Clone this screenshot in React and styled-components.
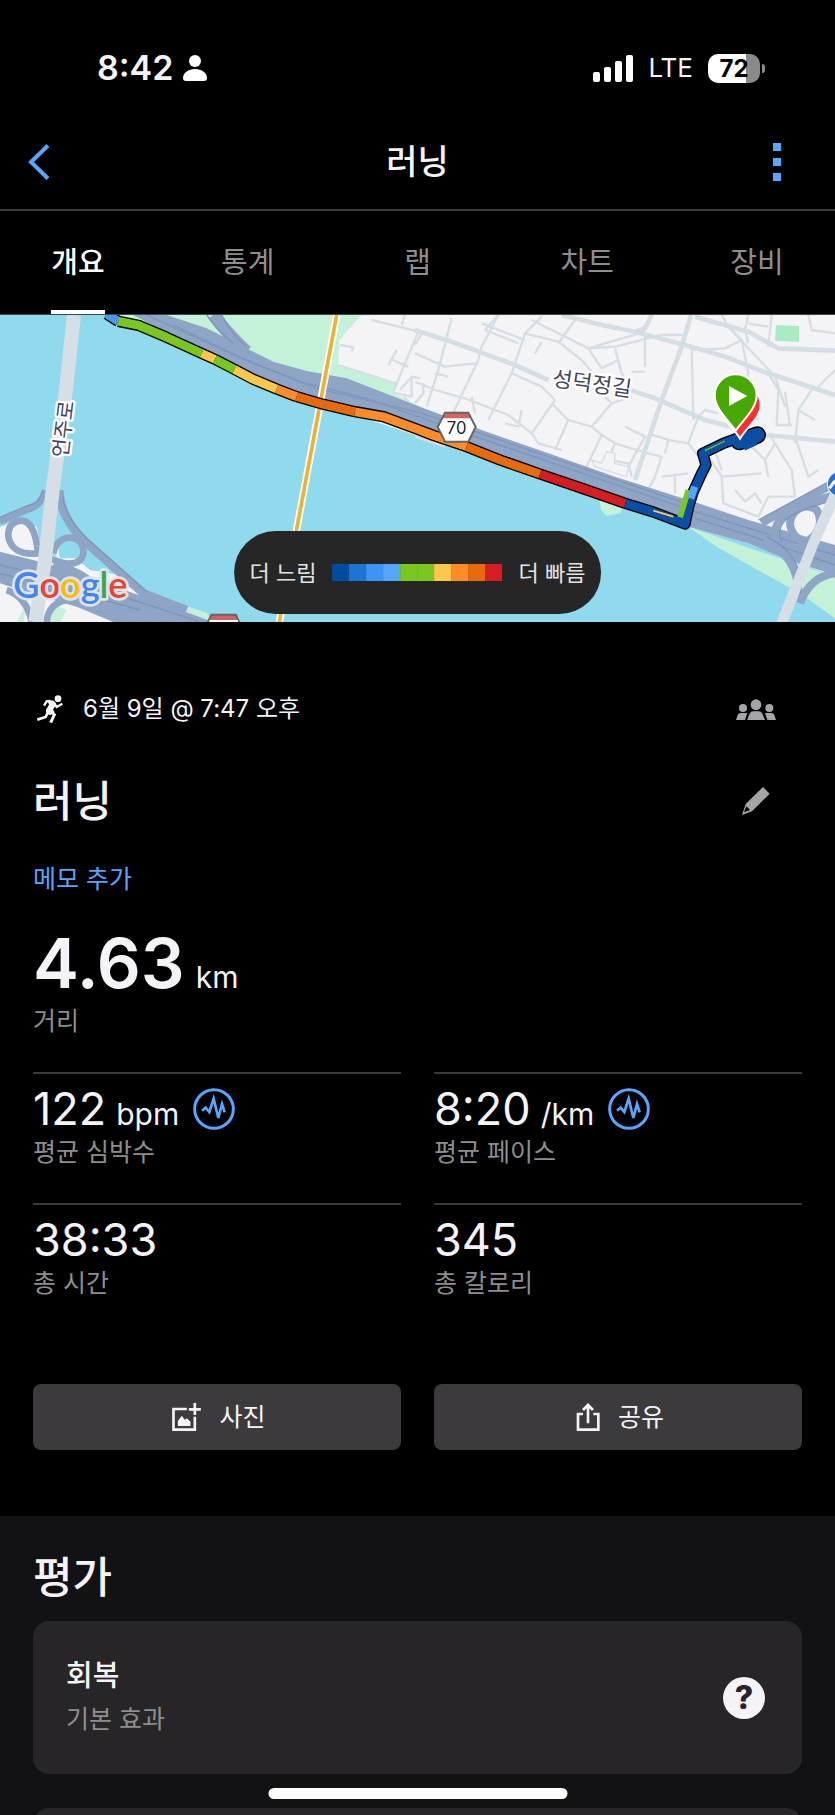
import React from 'react';
import styled, { createGlobalStyle } from 'styled-components';

const GlobalStyle = createGlobalStyle`
  * {
    box-sizing: border-box;
  }

  body {
    margin: 0;
    background: #000;
    color: #f5f3f7;
    font-family: Inter, 'Noto Sans CJK KR', sans-serif;
  }

  h1, h2, h3, p {
    margin: 0;
  }

  button {
    padding: 0;
    border: 0;
    background: none;
    color: inherit;
    font: inherit;
    cursor: pointer;
  }

  svg {
    display: block;
  }
`;

const Screen = styled.div`
  position: relative;
  display: flex;
  flex-direction: column;
  height: 100vh;
  overflow: hidden;
`;

const StatusBar = styled.div`
  flex: none;
  display: flex;
  justify-content: space-between;
  align-items: center;
  height: 118px;
  padding: 18px 70px 0 97px;
`;

const StatusGroup = styled.div`
  display: flex;
  align-items: center;
  gap: ${({ $gap }) => $gap}px;
`;

const Clock = styled.span`
  font-size: 34px;
  line-height: 40px;
  font-weight: 600;
`;

const Network = styled.span`
  font-size: 26px;
  line-height: 32px;
`;

const Battery = styled.div`
  display: flex;
  align-items: center;
  gap: 2px;
`;

const BatteryLevel = styled.span`
  width: 52px;
  border-radius: 10px;
  background: linear-gradient(to right, #fff 73%, #8a8a8a 73%);
  color: #000;
  font-size: 24px;
  line-height: 29px;
  font-weight: 700;
  text-align: center;
`;

const BatteryTip = styled.span`
  width: 3px;
  height: 9px;
  border-radius: 0 4px 4px 0;
  background: #8a8a8a;
`;

const Header = styled.header`
  flex: none;
  display: grid;
  grid-template-columns: 60px 1fr 60px;
  align-items: center;
  height: 93px;
  padding: 0 28px 4px;
  border-bottom: 2px solid #3c3c3c;
`;

const HeaderTitle = styled.h1`
  font-size: 34px;
  line-height: 44px;
  font-weight: 500;
  text-align: center;
`;

const HeaderButton = styled.button`
  display: flex;
  justify-content: ${({ $align }) => $align};
  align-items: center;
  height: 60px;
  padding-right: 26px;
  color: #58a6ff;
`;

const Tabs = styled.nav`
  flex: none;
  display: flex;
  justify-content: space-between;
  height: 104px;
  padding: 0 51px;
  border-bottom: 1px solid #444;
`;

const Tab = styled.button`
  min-width: 54px;
  border-top: 4px solid transparent;
  border-bottom: 4px solid ${({ $active }) => ($active ? '#fff' : 'transparent')};
  color: ${({ $active }) => ($active ? '#fff' : '#8f8d90')};
  font-size: 29px;
  line-height: 40px;
  font-weight: ${({ $active }) => ($active ? 500 : 400)};
`;

const Content = styled.main`
  flex: 1;
  min-height: 0;
  overflow-y: auto;
  scrollbar-width: none;
`;

const MapArea = styled.section`
  position: relative;
`;

const MapSvg = styled.svg`
  width: 100%;
  height: auto;
`;

const Legend = styled.div`
  position: absolute;
  left: 50%;
  bottom: 8px;
  transform: translateX(-50%);
  display: flex;
  align-items: center;
  gap: 16px;
  height: 83px;
  padding: 0 16px;
  border-radius: 42px;
  background: #262626;
  color: #e4e4e4;
  font-size: 22px;
  line-height: 32px;
  white-space: nowrap;
`;

const LegendBar = styled.div`
  display: flex;
`;

const LegendColor = styled.span`
  width: 17px;
  height: 17px;
  background: ${({ $color }) => $color};
`;

const Summary = styled.section`
  padding: 64px 33px 66px;
`;

const Row = styled.div`
  display: flex;
  justify-content: space-between;
  align-items: center;
  padding-right: 26px;
`;

const DateRow = styled(Row)`
  height: 46px;
  margin-bottom: 39px;
`;

const TitleRow = styled(Row)`
  height: 60px;
  margin-bottom: 30px;
  padding-right: 32px;
`;

const DateText = styled.p`
  display: flex;
  align-items: center;
  gap: 20px;
  padding-left: 4px;
  font-size: 24px;
  line-height: 36px;
`;

const SectionTitle = styled.h2`
  font-size: 43px;
  line-height: 50px;
  font-weight: 500;
`;

const IconButton = styled.button`
  color: #a6a4a8;
`;

const MemoButton = styled.button`
  display: block;
  margin-bottom: 30px;
  color: #58a6ff;
  font-size: 25px;
  line-height: 36px;
`;

const Distance = styled.div`
  margin-bottom: 33px;
`;

const DistanceValue = styled.p`
  display: flex;
  align-items: baseline;
  gap: 11px;
  margin-bottom: 4px;
  font-size: 69px;
  line-height: 72px;
  font-weight: 600;
`;

const Unit = styled.span`
  font-size: 30px;
  line-height: 36px;
  font-weight: 400;
`;

const Label = styled.div`
  color: #8f8d90;
  font-size: 25px;
  line-height: 36px;
`;

const TwoColumns = styled.div`
  display: grid;
  grid-template-columns: 1fr 1fr;
  column-gap: 33px;
`;

const Stat = styled.div`
  height: 131px;
  padding-top: 10px;
  border-top: 2px solid #3a393b;
`;

const StatValue = styled.div`
  display: flex;
  align-items: center;
  gap: 14px;
  height: 50px;
  font-size: 45px;
  line-height: 50px;
`;

const StatNumber = styled.span`
  display: flex;
  align-items: baseline;
  gap: 10px;
`;

const ChartButton = styled.button`
  color: #58a6ff;
`;

const Actions = styled(TwoColumns)`
  margin-top: 50px;
`;

const ActionButton = styled.button`
  display: flex;
  justify-content: center;
  align-items: center;
  gap: 18px;
  height: 66px;
  padding-left: 4px;
  border-radius: 8px;
  background: #3c3a3c;
  font-size: 25px;
  line-height: 36px;
`;

const Evaluation = styled.section`
  padding: 36px 33px;
  background: #121114;
`;

const Card = styled.div`
  display: flex;
  justify-content: space-between;
  align-items: center;
  min-height: 153px;
  padding: 37px;
  padding-left: 33px;
  border-radius: 16px;
  background: #272528;
`;

const CardList = styled.div`
  display: flex;
  flex-direction: column;
  gap: 34px;
  margin-top: 19px;
`;

const CardTitle = styled.h3`
  margin-bottom: 7px;
  font-size: 29px;
  line-height: 36px;
  font-weight: 500;
`;

const HelpButton = styled.button`
  width: 42px;
  height: 42px;
  border-radius: 50%;
  background: #f5f3f7;
  color: #272528;
  font-size: 32px;
  line-height: 42px;
  font-weight: 800;
`;

const HomeIndicator = styled.div`
  position: absolute;
  left: 50%;
  bottom: 16px;
  width: 299px;
  height: 11px;
  border-radius: 6px;
  background: #fff;
  transform: translateX(-50%);
`;

const TABS = ['개요', '통계', '랩', '차트', '장비'];

const PACE_COLORS = [
  '#004c9e',
  '#1a76d2',
  '#3b94f6',
  '#55a6ff',
  '#7ac71f',
  '#7ac71f',
  '#fbc84c',
  '#ff8c28',
  '#e86a0a',
  '#d71d22',
];

const STATS = [
  { label: '평균 심박수', value: '122', unit: 'bpm', chart: true },
  { label: '평균 페이스', value: '8:20', unit: '/km', chart: true },
  { label: '총 시간', value: '38:33' },
  { label: '총 칼로리', value: '345' },
];

const MAIN_STREETS = [
  'M0 60L110 95L300 165L400 210M645 240L720 265L870 330L1050 375L1260 395',
  'M440 15L560 45L660 65L810 105L930 140L1060 190L1260 255',
  'M828 15L800 110L740 270L700 390L660 510',
  'M710 15L690 55L660 65',
  'M840 20L1000 65L1090 115L1260 122',
];

const STREETS = [
  'M250 15L200 110L190 150L100 340M110 25L70 180L35 290M0 130L90 170L180 160',
  'M0 215L60 240L150 265L280 315M20 70L0 105M200 40L330 90M250 15L210 60L310 100',
  'M380 20L330 70L430 95L500 150L530 185M330 70L290 190L220 330M290 190L380 230L420 270',
  'M350 30L450 80L520 115L690 65M520 115L600 110L740 75L810 75M520 115L560 175',
  'M600 115L620 190L650 240M690 75V170M650 185H690M560 175L610 150',
  'M420 270L350 370L370 400L440 420M280 315L350 370M410 280L460 330L530 350L560 375',
  'M530 350L590 280L650 260M590 280L560 250M460 330L420 420M560 375L600 400L700 430',
  'M560 375L510 480M600 400L580 450L640 460L650 500M700 430L740 440L720 500L700 540',
  'M740 270L850 320L820 400L760 390L700 370M820 400L850 440M760 390L750 430',
  'M830 110L835 330M835 120L930 115L980 90L940 50L920 15M980 90L1000 190L980 240L1030 330',
  'M940 50L1080 200L1110 290M1060 190L1090 240L1085 350M1110 245L1125 350M1085 345H1130',
  'M1070 15L1060 110M1000 15L990 60L1000 100M1180 15L1190 60L1260 70M1000 40L1060 50',
  'M1190 240L1150 300L1140 400M1140 380L1180 500L1210 480M1150 300L1200 330M1260 180L1200 240',
  'M1000 400L1050 450L1080 400L1130 480L1140 560M1080 400L1065 375M1050 450L1060 500',
  'M880 440L920 500L925 580L1030 620M920 500L1040 490M960 540L990 575L1020 550L1040 580',
  'M900 420L920 480M850 320L870 300L910 310M1030 620L1060 560L1140 560',
  'M60 190L100 200M170 260L180 310M320 300L310 350L270 340M360 130L380 95M90 410L0 380',
  'M480 30L430 100M630 350L690 380L640 470M740 500L820 490M780 500V550M0 280L25 250V220',
];

const WEST_STREETS = [
  'M1115 30L1255 65L1180 245M1015 165L1195 222M1255 65L1300 80M1205 45L1215 15',
  'M1020 105L1060 112L1055 125M1190 120L1165 165M1178 150L1225 170M1200 240L1235 200L1260 205',
  'M1235 200V260L1180 248M1210 260L1225 275',
];

const ROUTE = [
  { color: '#4a98f5', d: 'M320 12L355 34' },
  { color: '#7ac71f', d: 'M355 34L415 46L500 82L605 130' },
  { color: '#fbc84c', d: 'M605 130L645 148' },
  { color: '#7ac71f', d: 'M645 148L703 178' },
  { color: '#fbc84c', d: 'M703 178L760 208L830 237' },
  { color: '#ff8c28', d: 'M830 237L890 260' },
  { color: '#e86a0a', d: 'M890 260L970 283L1065 305' },
  { color: '#ff8c28', d: 'M1065 305L1150 320L1250 357L1300 376L1400 410' },
  { color: '#e86a0a', d: 'M1400 410L1500 450L1620 492' },
  { color: '#d71d22', d: 'M1620 492L1740 533L1876 580' },
  {
    color: '#0a4fa4',
    d: 'M1876 580L1960 606L2055 642L2066 590L2080 545L2105 490L2118 465L2108 430L2170 400L2225 380L2275 368',
  },
];

const ROUTE_OUTLINE = ROUTE.map(({ d }) => d).join('');

function RouteMap() {
  return (
    <MapSvg viewBox="0 15 2505 921" role="img" aria-label="러닝 경로 지도">
      <rect y="15" width="2505" height="921" fill="#90daed" />

      {/* north bank */}
      <path
        d="M330 15L600 145L830 250L1050 310L1260 380L1645 490L1885 580L2065 650L2245 700L2505 800V15Z"
        fill="#f4f3f6"
      />
      <path
        d="M330 15H1085L1040 70L1018 90L1015 165L1195 222L1180 250L1260 290L1200 340L830 240Z"
        fill="#c4f2d8"
      />
      <path d="M1085 15L1030 75L1015 165L1195 222L1215 170L1260 65V15Z" fill="#f4f3f6" />
      <path
        d="M2065 650L2250 715L2505 800V925L2400 850L2300 795L2150 710Z"
        fill="#c4f2d8"
      />
      <path d="M1800 570L1870 590L1860 610L1820 618L1802 600Z" fill="#c4f2d8" />
      <path d="M2328 45L2397 48V96L2325 92Z" fill="#a9ecc3" />

      <g fill="none" stroke="#d5dfe3" strokeLinejoin="round">
        {WEST_STREETS.map((d) => (
          <path key={d} d={d} strokeWidth="7" />
        ))}
        <g transform="translate(1245 0)">
          {STREETS.map((d) => (
            <path key={d} d={d} strokeWidth="7" />
          ))}
          {MAIN_STREETS.map((d) => (
            <path key={d} d={d} strokeWidth="14" />
          ))}
          <path
            d="M530 450L560 460L575 425L600 430L598 460L640 470L635 500L540 470Z"
            fill="#f4f3f6"
            strokeWidth="4"
          />
        </g>
      </g>

      {/* riverside expressway */}
      <path
        d="M400 15H500L620 55L730 110L820 155L920 183L1040 205L1260 290L1445 360L1645 430L1845 500L2095 580L2245 630L2505 705V795L2365 750L2245 700L2065 650L1885 580L1645 490L1260 350L1050 300L830 232L760 200L600 120Z"
        fill="#8fa5c6"
      />
      <path d="M640 15Q690 80 740 125" fill="none" stroke="#8fa5c6" strokeWidth="38" />
      <g fill="none" stroke="#7f96ba" strokeWidth="4">
        <path d="M620 15Q660 70 700 100M665 15Q700 80 740 110" />
        <path d="M440 15L700 135L900 215L1100 265L1260 322L1645 455L2085 605L2505 735" />
        <path d="M520 45L760 160L950 235L1260 308L1645 440L2085 590" />
        <path d="M2085 625L2245 675L2505 765" />
      </g>

      {/* north-east interchange */}
      <g fill="none" stroke="#8fa5c6" strokeWidth="24">
        <path d="M2285 640Q2350 600 2505 520" />
        <path d="M2330 700C2310 640 2340 600 2505 555" />
        <path d="M2400 690C2330 640 2400 560 2450 600Q2475 640 2440 680L2390 720" />
        <path d="M2290 690Q2400 740 2395 860" />
        <path d="M2400 880Q2430 800 2505 790" />
      </g>
      <path
        d="M2275 630Q2350 590 2505 505M2345 700C2325 640 2350 610 2505 570M2300 680Q2412 735 2402 850"
        fill="none"
        stroke="#7f96ba"
        strokeWidth="4"
      />
      <path d="M2505 555L2440 700L2345 940" fill="none" stroke="#d5dfe5" strokeWidth="32" />

      {/* south-west interchange */}
      <path
        d="M0 650L60 630L110 650L125 720L170 740L160 705L215 735L270 780L360 795L430 860L520 890L620 936H0Z"
        fill="#f4f3f6"
      />
      <path d="M170 690L200 700L235 745L180 745Z" fill="#90daed" />
      <path d="M70 900L85 860L70 936H50ZM150 936L165 885L200 900L180 936Z" fill="#c4f2d8" />
      <path d="M455 855L620 908L640 936H560L470 885Z" fill="#c4f2d8" />
      <path
        d="M0 725L120 755L240 790L400 850L500 885L640 936H340L230 890L110 855L0 820Z"
        fill="#8fa5c6"
      />
      <g fill="none" stroke="#8fa5c6" strokeWidth="20">
        <path d="M135 540Q125 590 80 600L0 635" />
        <path d="M178 540Q180 620 250 690L430 850L560 900" strokeWidth="26" />
        <path d="M110 730C20 740 10 660 40 640C90 610 110 670 115 740" />
        <path d="M160 730C170 670 240 670 250 715C255 760 215 775 150 745" />
        <path d="M160 770Q230 770 290 830L350 900" />
        <path d="M95 936Q80 860 20 840M140 936Q145 880 200 870" />
      </g>
      <g fill="none" stroke="#7f96ba" strokeWidth="4">
        <path d="M0 765L240 825L400 870L600 936M0 790L240 850L420 900" />
        <path d="M0 622L80 588Q120 580 127 545M188 560Q195 620 260 685L440 845" />
      </g>
      <path
        d="M222 15L198 240L158 540L135 750L106 936"
        fill="none"
        stroke="#d5dfe5"
        strokeWidth="42"
      />

      {/* subway line across the river */}
      <path d="M1010 15L838 936" fill="none" stroke="#fff" strokeWidth="22" />
      <path d="M1010 15L838 936" fill="none" stroke="#edb235" strokeWidth="11" />

      <g fill="none" strokeLinejoin="round">
        <path d={ROUTE_OUTLINE} stroke="#000" strokeWidth="34" />
        <path d="M2218 395L2272 375" stroke="#000" strokeWidth="52" strokeLinecap="round" />
        {ROUTE.map(({ color, d }) => (
          <path key={d} d={d} stroke={color} strokeWidth="26" />
        ))}
        <path d="M2218 395L2272 375" stroke="#0a4fa4" strokeWidth="43" strokeLinecap="round" />
        <path d="M2232 415L2270 398" stroke="#0a4fa4" strokeWidth="14" />
        <path d="M2040 622L2065 540" stroke="#7ac71f" strokeWidth="17" />
        <path d="M2072 565L2084 530" stroke="#55a6ff" strokeWidth="22" />
        <path d="M2115 422L2175 393" stroke="#7ac71f" strokeWidth="4" />
        <path d="M1960 602L2020 620" stroke="#fbc84c" strokeWidth="6" />
      </g>

      {/* finish and start pins */}
      <path
        d="M2220 386C2200 350 2158 325 2158 285A62 62 0 0 1 2282 285C2282 325 2240 350 2220 386Z"
        fill="#ff2d2f"
        stroke="#fff"
        strokeWidth="6"
      />
      <path
        d="M2207 362C2187 332 2144 297 2144 256A63 63 0 0 1 2270 256C2270 297 2227 332 2207 362Z"
        fill="#47a900"
        stroke="#fff"
        strokeWidth="6"
      />
      <path d="M2187 228L2242 258L2187 288Z" fill="#fff" />

      {/* road shields */}
      <path d="M1313 351L1335 308H1405L1427 351L1405 395H1335Z" fill="#fff" />
      <path d="M1326 325L1335 308H1405L1414 325Z" fill="#dc6060" />
      <path
        d="M1313 351L1335 308H1405L1427 351L1405 395H1335Z"
        fill="none"
        stroke="#666"
        strokeWidth="6"
      />
      <text x="1370" y="371" fontSize="50" textAnchor="middle" fill="#222">
        70
      </text>
      <path d="M624 936L634 914H708L717 936Z" fill="#d85f60" stroke="#666" strokeWidth="6" />
      <path d="M628 930H714V936H628Z" fill="#fff" />
      <circle cx="2520" cy="522" r="38" fill="#2b6fd6" stroke="#fff" strokeWidth="3" />
      <path d="M2488 535L2505 512" stroke="#fff" strokeWidth="9" />

      <g
        fill="#3f4560"
        stroke="#fff"
        strokeWidth="14"
        strokeLinejoin="round"
        paintOrder="stroke"
        textAnchor="middle"
        fontSize="65"
      >
        <text transform="translate(1773 244) rotate(8)">성덕정길</text>
        <text transform="translate(212 360) rotate(-83)" fontSize="62">
          언주로
        </text>
      </g>
      <text
        x="40"
        y="864"
        fontFamily="Lato, sans-serif"
        fontSize="108"
        fontWeight="600"
        stroke="#dfe3ea"
        strokeWidth="16"
        strokeLinejoin="round"
        paintOrder="stroke"
      >
        <tspan fill="#4285f4">G</tspan>
        <tspan fill="#ea4335">o</tspan>
        <tspan fill="#fbbc05">o</tspan>
        <tspan fill="#4285f4">g</tspan>
        <tspan fill="#34a853">l</tspan>
        <tspan fill="#ea4335">e</tspan>
      </text>
    </MapSvg>
  );
}

function PersonIcon() {
  return (
    <svg width="24" height="26" viewBox="0 0 24 26" fill="#fff">
      <circle cx="12" cy="6" r="6" />
      <path d="M0 23C0 18 5 14 12 14S24 18 24 23Q24 26 21 26H3Q0 26 0 23Z" />
    </svg>
  );
}

function SignalIcon() {
  return (
    <svg width="40" height="27" viewBox="0 0 40 27" fill="#fff">
      <rect y="17" width="7" height="10" rx="2" />
      <rect x="11" y="12" width="7" height="15" rx="2" />
      <rect x="22" y="6" width="7" height="21" rx="2" />
      <rect x="33" width="7" height="27" rx="2" />
    </svg>
  );
}

function BackIcon() {
  return (
    <svg width="22" height="36" viewBox="0 0 22 36" fill="none" stroke="currentColor">
      <path d="M20 1.5L3 18L20 34.5" strokeWidth="4" />
    </svg>
  );
}

function MoreIcon() {
  return (
    <svg width="8" height="38" viewBox="0 0 8 38" fill="currentColor">
      <rect width="8" height="8" />
      <rect y="15" width="8" height="8" />
      <rect y="30" width="8" height="8" />
    </svg>
  );
}

function RunnerIcon() {
  return (
    <svg width="26" height="28" viewBox="112 105 78 84" fill="none" stroke="#f5f3f7">
      <circle cx="175" cy="116" r="10" fill="#f5f3f7" stroke="none" />
      <path
        d="M143 119L162 122Q172 129 167 138L160 149L165 157L151 166Q137 160 139 149L148 134Z"
        fill="#f5f3f7"
        stroke="none"
      />
      <path d="M152 123L141 124L133 137" strokeWidth="7" />
      <path d="M163 129L171 141L188 131" strokeWidth="7" />
      <path d="M152 154L164 164L153 188" strokeWidth="9" />
      <path d="M146 154L138 171L113 179" strokeWidth="8" />
    </svg>
  );
}

function GroupIcon() {
  return (
    <svg width="40" height="21" viewBox="963 117 120 63" fill="currentColor">
      <circle cx="1023" cy="134" r="16" />
      <circle cx="984" cy="144" r="12" />
      <circle cx="1063" cy="144" r="12" />
      <path d="M996 180L1004 161Q1007 154 1015 154H1031Q1039 154 1042 161L1050 180Z" />
      <path d="M963 180L968 165Q971 159 977 159H997L990 180Z" />
      <path d="M1083 180L1078 165Q1075 159 1069 159H1050L1057 180Z" />
    </svg>
  );
}

function PencilIcon() {
  return (
    <svg width="28" height="28" viewBox="982 382 84 84" fill="currentColor">
      <path
        fillRule="evenodd"
        d="M1045 382L1065 402L1012 455L982 466L993 433ZM995 440L988 458L1006 451Z"
      />
    </svg>
  );
}

function PulseIcon() {
  return (
    <svg width="42" height="42" viewBox="0 0 126 126" fill="none" stroke="currentColor">
      <circle cx="63" cy="63" r="58" strokeWidth="9" />
      <path d="M27 68L38 59L49 72L62 32L76 90L87 48L95 73" strokeWidth="8" />
    </svg>
  );
}

function PhotoIcon() {
  return (
    <svg width="29" height="28" viewBox="38 54 86 84" fill="none" stroke="currentColor">
      <path d="M82 72H42V134H106V95" strokeWidth="8" />
      <path d="M106 54V90M88 73H124" strokeWidth="8" />
      <path
        d="M55 123V108L67 92L76 104L82 100L93 110V123Z"
        fill="currentColor"
        stroke="none"
      />
    </svg>
  );
}

function ShareIcon() {
  return (
    <svg width="24" height="28" viewBox="1243 54 72 84" fill="none" stroke="currentColor">
      <path d="M1264 87H1249V134H1310V87H1295" strokeWidth="8" />
      <path d="M1279 115V62M1264 75L1279 60L1294 75" strokeWidth="8" />
    </svg>
  );
}

function StatItem({ label, value, unit, chart }) {
  return (
    <Stat>
      <StatValue>
        <StatNumber>
          {value}
          {unit && <Unit>{unit}</Unit>}
        </StatNumber>
        {chart && (
          <ChartButton aria-label={`${label} 차트`}>
            <PulseIcon />
          </ChartButton>
        )}
      </StatValue>
      <Label>{label}</Label>
    </Stat>
  );
}

function App() {
  return (
    <>
      <GlobalStyle />
      <Screen>
        <StatusBar>
          <StatusGroup $gap={10}>
            <Clock>8:42</Clock>
            <PersonIcon />
          </StatusGroup>
          <StatusGroup $gap={15}>
            <SignalIcon />
            <Network>LTE</Network>
            <Battery>
              <BatteryLevel>72</BatteryLevel>
              <BatteryTip />
            </Battery>
          </StatusGroup>
        </StatusBar>
        <Header>
          <HeaderButton $align="flex-start" aria-label="뒤로">
            <BackIcon />
          </HeaderButton>
          <HeaderTitle>러닝</HeaderTitle>
          <HeaderButton $align="flex-end" aria-label="더 보기">
            <MoreIcon />
          </HeaderButton>
        </Header>
        <Tabs>
          {TABS.map((tab, index) => (
            <Tab key={tab} $active={index === 0}>
              {tab}
            </Tab>
          ))}
        </Tabs>
        <Content>
          <MapArea>
            <RouteMap />
            <Legend>
              <span>더 느림</span>
              <LegendBar>
                {PACE_COLORS.map((color, index) => (
                  <LegendColor key={index} $color={color} />
                ))}
              </LegendBar>
              <span>더 빠름</span>
            </Legend>
          </MapArea>
          <Summary>
            <DateRow>
              <DateText>
                <RunnerIcon />
                6월 9일 @ 7:47 오후
              </DateText>
              <IconButton aria-label="공개 범위">
                <GroupIcon />
              </IconButton>
            </DateRow>
            <TitleRow>
              <SectionTitle>러닝</SectionTitle>
              <IconButton aria-label="이름 편집">
                <PencilIcon />
              </IconButton>
            </TitleRow>
            <MemoButton>메모 추가</MemoButton>
            <Distance>
              <DistanceValue>
                4.63
                <Unit>km</Unit>
              </DistanceValue>
              <Label>거리</Label>
            </Distance>
            <TwoColumns>
              {STATS.map((stat) => (
                <StatItem key={stat.label} {...stat} />
              ))}
            </TwoColumns>
            <Actions>
              <ActionButton>
                <PhotoIcon />
                사진
              </ActionButton>
              <ActionButton>
                <ShareIcon />
                공유
              </ActionButton>
            </Actions>
          </Summary>
          <Evaluation>
            <SectionTitle>평가</SectionTitle>
            <CardList>
              <Card>
                <div>
                  <CardTitle>회복</CardTitle>
                  <Label>기본 효과</Label>
                </div>
                <HelpButton aria-label="도움말">?</HelpButton>
              </Card>
              <Card />
            </CardList>
          </Evaluation>
        </Content>
        <HomeIndicator />
      </Screen>
    </>
  );
}

export default App;
